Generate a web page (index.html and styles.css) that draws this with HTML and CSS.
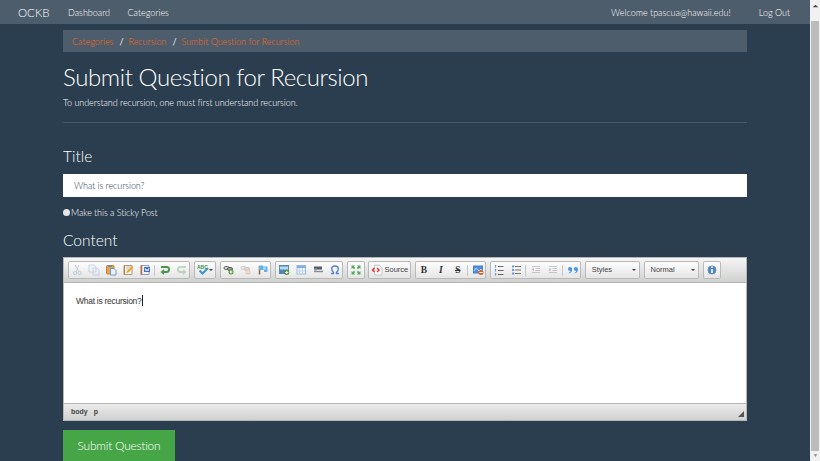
FILE: index.html
```html
<!DOCTYPE html>
<html lang="en">
<head>
<meta charset="utf-8">
<title>OCKB</title>
<link rel="stylesheet" href="styles.css">
</head>
<body>
<div class="page">
  <nav class="navbar">
    <a class="brand"><span>OCKB</span></a>
    <a class="dash"><span>Dashboard</span></a>
    <a class="cats"><span>Categories</span></a>
    <span class="welcome">Welcome tpascua@hawaii.edu!</span>
    <a class="logout">Log Out</a>
  </nav>
  <main class="container">
    <div class="breadcrumb"><a class="b1">Categories</a><i>/</i><a class="b2">Recursion</a><i>/</i><a class="b3">Sumbit Question for Recursion</a></div>
    <h1><span>Submit Question for Recursion</span></h1>
    <p class="lead"><span>To understand recursion, one must first understand recursion.</span></p>
    <hr>
    <h2 class="title"><span>Title</span></h2>
    <div class="field"><span>What is recursion?</span></div>
    <div class="sticky"><b class="radio"></b><span>Make this a Sticky Post</span></div>
    <h2 class="content"><span>Content</span></h2>
    <section class="editor">
      <div class="toolbar">
        <div class="group">
          <svg class="off" viewBox="0 0 12 12"><path d="M4 1l4 7M8 1L5 8" stroke="#778" fill="none"/><circle cx="4" cy="9" r="1.6" fill="none" stroke="#48a"/><circle cx="8.5" cy="9" r="1.6" fill="none" stroke="#48a"/></svg>
          <svg class="off" viewBox="0 0 12 12"><path d="M1 1h5l2 2v5H1zM5 4h4l2 2v5H5z" fill="#e4efff" stroke="#6c91c4"/></svg>
          <svg viewBox="0 0 12 12"><rect x="1.500" y="1.500" width="7.500" height="8.500" rx="1" fill="#dfa652" stroke="#b98337"/><path d="M3 1h4v2H3z" fill="#888"/><path d="M5.500 4.500h3.500l2 2v4.500h-5.500z" fill="#eaf3ff" stroke="#7397c8"/></svg>
          <svg viewBox="0 0 12 12"><path d="M2 1.500h8v9H2z" fill="#fff8e5" stroke="#a89a86"/><path d="M2.500 1v10" stroke="#b77b52"/><path d="M4 3h5M4 5h3" stroke="#bbb"/><path d="M4 9l1-2 5-5 1.500 1.500-5 5z" fill="#e6a52e"/></svg>
          <svg viewBox="0 0 12 12"><path d="M2 1.500h8v9H2z" fill="#eff4ff" stroke="#8ba2cc"/><path d="M2.500 1v10" stroke="#c66842" stroke-width="1.500"/><path d="M5 3h6v5H5z" fill="#4671bf"/><path d="M6 4l1 3 1-2 1 2 1-3" stroke="#fff" stroke-width=".7" fill="none"/></svg>
          <span class="sep"></span>
          <svg viewBox="0 0 12 12"><path d="M2 3h5.500q2.500 0 2.500 2.400T7.500 8H4" fill="none" stroke="#45964a" stroke-width="2"/><path d="M5 5v6L1.500 8z" fill="#45964a"/></svg>
          <svg class="off" viewBox="0 0 12 12"><path d="M10 3H4.500Q2 3 2 5.400T4.500 8H8" fill="none" stroke="#45964a" stroke-width="2"/><path d="M7 5v6l3.500-3z" fill="#45964a"/></svg>
        </div>
        <div class="group spell">
          <svg viewBox="0 0 12 12"><text x="0" y="5" class="abc">ABC</text><path d="M2.500 6.500l3 3L11 4" fill="none" stroke="#3d94cf" stroke-width="2"/></svg><span class="arrow"></span>
        </div>
        <div class="group">
          <svg viewBox="0 0 12 12"><rect x="1" y="2.500" width="5" height="3" rx="1.500" fill="#ccc" stroke="#666"/><rect x="4.500" y="3.500" width="5" height="3" rx="1.500" fill="#999" stroke="#666"/><circle cx="8" cy="8" r="2.500" fill="#5c972d"/><path d="M6.500 8h3M8 6.500v3" stroke="#fff"/></svg>
          <svg class="off" viewBox="0 0 12 12"><rect x="1" y="2.500" width="5" height="3" rx="1.500" fill="#ccc" stroke="#666"/><rect x="4.500" y="3.500" width="5" height="3" rx="1.500" fill="#999" stroke="#666"/><circle cx="8" cy="8" r="2.500" fill="#e2722e"/><path d="M6.500 8h3" stroke="#fff"/></svg>
          <svg viewBox="0 0 12 12"><path d="M2.500 2v8.500" stroke="#9a6533" stroke-width="1.500"/><path d="M2 1.500h4v1h4.500V8H7V6H2z" fill="#62b2ea"/><path d="M6 3.500h3v2H6z" fill="#b1dcfb"/></svg>
        </div>
        <div class="group">
          <svg viewBox="0 0 12 12"><rect x="1.500" y="1.500" width="9" height="8" fill="#4c85b8" stroke="#5d88b3"/><path d="M2 2.500h8v3H2z" fill="#b6ddf5"/><circle cx="8.800" cy="8.500" r="2.500" fill="#5c972d"/><path d="M7.300 8.500h3M8.800 7v3" stroke="#fff"/></svg>
          <svg viewBox="0 0 12 12"><rect x="2" y="1.500" width="8.500" height="8.500" fill="#eef5ff" stroke="#98b9e1"/><path d="M2 3h8.500" stroke="#85ace0" stroke-width="2"/><path d="M4.500 4v6M7.500 4v6M2 7h8" stroke="#c0d5ef"/></svg>
          <svg viewBox="0 0 12 12"><path d="M2 2.500h8v3H2z" fill="#555c65"/><path d="M2 7.500h9" stroke="#868c98" stroke-width="1.500"/><path d="M2 4.500h3v2H2z" fill="#999"/></svg>
          <svg viewBox="0 0 12 12"><path d="M2 9.500h2.500V8.300Q2.700 7 2.700 5 2.700 2 6 2t3.300 3q0 2-1.800 3.300v1.200H10" fill="none" stroke="#5584cf" stroke-width="1.400"/></svg>
        </div>
        <div class="group"><svg viewBox="0 0 12 12"><path d="M1.500 1.500H5L4 2.700 5.200 4 4 5.200 2.700 4 1.500 5zM10.500 1.500V5L9.300 4 8 5.200 6.800 4 8 2.700l-1-1.200zM1.500 10.500V7l1.200 1L4 6.800 5.200 8 4 9.300l1 1.200zM10.500 10.500H7l1-1.200L6.800 8 8 6.800 9.300 8l1.200-1z" fill="#56a95f"/></svg></div>
        <div class="group source"><svg viewBox="0 0 12 12"><path d="M3.500 1h4.500l3 3v7H3.500z" fill="#fafafa" stroke="#c5c5c5"/><path d="M3.500 4L1.500 6l2 2M6 4l2 2-2 2" fill="none" stroke="#dd3e3e" stroke-width="1.500"/></svg><span>Source</span></div>
        <div class="group">
          <b class="glyph">B</b><b class="glyph"><i>I</i></b><b class="glyph"><s>S</s></b><span class="sep"></span>
          <svg viewBox="0 0 12 12"><rect x="1.500" y="2" width="9" height="7" fill="#4d8fe0" stroke="#4a7cbc"/><path d="M2 7l2-3 3 3 2-2 1 2" stroke="#bde0ff" fill="none"/><circle cx="9" cy="8.500" r="2.500" fill="#db6727"/><path d="M7.500 8.500h3" stroke="#fff"/></svg>
        </div>
        <div class="group">
          <svg viewBox="0 0 12 12"><path d="M5 2.500h5.500M5 6.500h5.500M5 10.500h5.500" stroke="#666"/><path d="M2.500 1v2.500M2.500 5v2.500M2.500 9v2.500" stroke="#6798d8" stroke-width="1.200"/></svg>
          <svg viewBox="0 0 12 12"><path d="M5 2.500h6M5 6h6M5 9.500h6" stroke="#777"/><path d="M2 2.500h2M2 6h2M2 9.500h2" stroke="#6798e8" stroke-width="2"/></svg>
          <span class="sep"></span>
          <svg class="off" viewBox="0 0 12 12"><path d="M2 2.500h8M5.500 4.500H10M5.500 6.500H10M2 8.500h8" stroke="#666"/><path d="M4 3.500v4L1.500 5.500z" fill="#558"/></svg>
          <svg class="off" viewBox="0 0 12 12"><path d="M2 2.500h8M5.500 4.500H10M5.500 6.500H10M2 8.500h8" stroke="#666"/><path d="M2 3.500v4l2.500-2z" fill="#558"/></svg>
          <span class="sep"></span>
          <svg viewBox="0 0 12 12"><path d="M5.200 5q0 3.500-3.200 4.500V8.500Q3.500 8 3.500 7 1 7 1 5t2-2 2.200 2zM11 5q0 3.500-3.200 4.500V8.500Q9.300 8 9.300 7 6.800 7 6.800 5t2-2T11 5z" fill="#4696e5"/></svg>
        </div>
        <div class="group select"><span>Styles</span><span class="arrow"></span></div>
        <div class="group select"><span>Normal</span><span class="arrow"></span></div>
        <div class="group"><svg viewBox="0 0 12 12"><circle cx="6" cy="6" r="4" fill="#5286bd" stroke="#5f8dc0"/><path d="M6 5v4M6 2.500V4" stroke="#fff" stroke-width="1.500"/></svg></div>
      </div>
      <div class="doc"><span>What is recursion?</span><span class="caret"></span></div>
      <div class="status"><span>body</span><span class="p">p</span><svg viewBox="0 0 6 6"><path d="M6 0v6H0z" fill="#555"/></svg></div>
    </section>
    <div class="submit"><span>Submit Question</span></div>
  </main>
</div>
<aside class="scroll"><svg viewBox="0 0 10 21"><path d="M2 7l3-3 3 3z" fill="#444"/></svg><div class="thumb"></div><svg class="down" viewBox="0 0 10 10"><path d="M3 3h4L5 6z" fill="#888"/></svg></aside>
</body>
</html>
```
FILE: styles.css
```css
* { box-sizing: border-box; }
body { margin: 0; width: 820px; height: 461px; overflow: hidden; display: flex; background: #2b3e50; color: #fff; font: 300 9px/12px Lato, sans-serif; font-variant-ligatures: none; }
span { white-space: nowrap; }
.page { width: 810px; height: 461px; overflow: hidden; }
.navbar { height: 24px; background: #4e5d6c; display: flex; align-items: center; padding: 2px 20px 0 18px; }
.brand { font-size: 11.5px; width: 50px; }
.dash { width: 59.500px; }
.welcome { margin-left: auto; margin-right: 28px; }
.container { margin-left: 63px; width: 684px; }
.breadcrumb { height: 22px; margin-top: 6px; background: #4e5d6c; padding: 1px 9px 0; display: flex; align-items: center; color: #f0691a; }
.breadcrumb .b1 { width: 42.500px; }
.breadcrumb .b2 { width: 39px; }
.breadcrumb .b3 { letter-spacing: -.03px; }
.breadcrumb i { color: #ebebeb; font-style: normal; font-weight: 400; width: 14px; padding-left: 5px; }
h1 { margin: 11px 0 0; font-size: 24px; line-height: 28px; font-weight: 300; letter-spacing: -.4px; }
.lead { margin: 6px 0 0; line-height: 12px; letter-spacing: -.06px; }
hr { margin: 13px 0 0; border: 0; height: 1px; background: #465767; }
h2 { margin: 0; font-size: 15.500px; line-height: 20px; font-weight: 300; }
.title { margin-top: 23px; }
.field { margin-top: 8px; height: 23px; background: #fff; color: #2b3e50; padding: 6px 11px; letter-spacing: -.07px; }
.sticky { display: flex; align-items: center; margin-top: 10px; height: 12px; letter-spacing: -.08px; }
.radio { width: 7px; height: 7px; border-radius: 50%; background: #e5e5e5; margin: -2px 1px 0 0; }
.content { margin-top: 11px; }
.editor { margin-top: 7px; height: 164px; border: 1px solid #b6b6b6; display: flex; flex-direction: column; background: #fff; font-family: "Liberation Sans", sans-serif; font-weight: 400; color: #444; }
.toolbar { height: 25px; display: flex; gap: 3.900px; padding: 3px 4px; background: linear-gradient(#f5f5f5, #cfd1cf); border-bottom: 1px solid #b6b6b6; }
.group { display: flex; align-items: center; height: 18px; border-radius: 2px; background: linear-gradient(#fff, #e4e4e4); box-shadow: inset 0 0 0 1px #b9b9b9; flex: none; }
.group svg { width: 12px; height: 12px; margin: -1px 2px 0 3px; flex: none; }
.group > svg:only-child { margin: -1px 3px 0; }
.off { opacity: .3; }
.sep { width: 1px; height: 11px; margin: 0 1px; background: #c8c8c8; }
.spell { width: 22px; }
.group.spell svg { margin-right: 0; }
.abc { font: 700 5px "Liberation Sans", sans-serif; fill: #458d4a; }
.arrow { border: 2px solid transparent; border-top-color: #444; border-bottom: 0; }
.source { width: 43px; font-size: 7.500px; }
.group.source svg { margin-right: 1px; }
.glyph { width: 17px; text-align: center; font: 700 9.500px/12px "Liberation Serif", serif; color: #333; }
.select { width: 55px; padding: 0 4px 0 6.500px; justify-content: space-between; font-size: 7.500px; }
.doc { flex: 1; padding: 12px; display: flex; font-size: 8.500px; letter-spacing: -.27px; color: #333; }
.caret { width: 1px; height: 11px; background: #222; }
.status { height: 17px; display: flex; align-items: center; gap: 6px; padding: 0 2px 0 7px; font-size: 7px; font-weight: 700; background: linear-gradient(#ebebeb, #cfd1cf); border-top: 1px solid #b6b6b6; }
.status svg { width: 6px; height: 6px; margin: 4px 0 0 auto; }
.submit { width: 112px; height: 32px; margin-top: 9px; background: #46a546; display: flex; align-items: center; justify-content: center; font-size: 12px; letter-spacing: -.25px; color: #fff; }
.scroll { width: 10px; height: 461px; background: #f1f1f1; display: flex; flex-direction: column; padding-left: 1px; }
.scroll svg { width: 9px; height: 21px; flex: none; }
.thumb { width: 8px; height: 430px; background: #bcbcbc; }
.scroll .down { height: 10px; }
```
